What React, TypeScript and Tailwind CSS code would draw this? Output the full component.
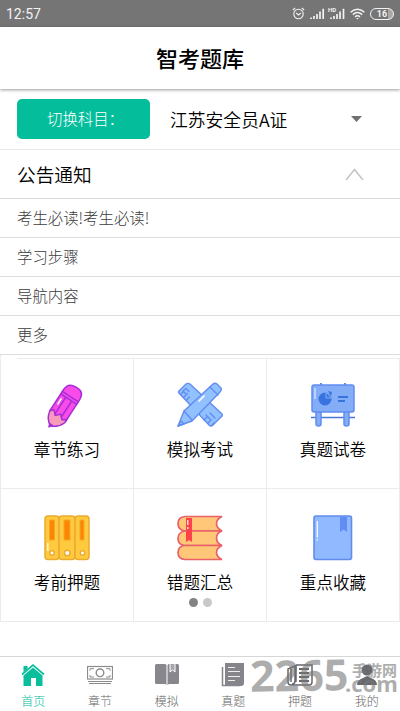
import React from 'react';

const notices = ['考生必读!考生必读!', '学习步骤', '导航内容', '更多'];

function Signal() {
  return (
    <svg width="15" height="12" viewBox="0 0 15 12" fill="none" stroke="#f2f2f2" strokeWidth="1.7">
      <path d="M1 11V9.5M4 11V8M7 11V6M10 11V3.5M13.2 11V.8" />
    </svg>
  );
}

function StatusBar() {
  return (
    <div className="flex h-[27px] items-center bg-[#757575] pl-[6px] pr-[6px] text-[#f2f2f2]">
      <span className="pt-[1px] font-[Roboto] text-[14px] leading-none">12:57</span>
      <div className="ml-auto flex items-center">
        <svg width="13" height="13" viewBox="0 0 13 13" fill="none" stroke="#f2f2f2" strokeWidth="1.1">
          <circle cx="6.5" cy="7" r="4.7" />
          <path d="M.8 3L3.2 1M12.2 3L9.8 1M4.2 6l2.3 2 2.4-2" />
        </svg>
        <div className="ml-[5px] h-3"><Signal /></div>
        <div className="relative ml-[4px] h-3">
          <svg width="16" height="12" viewBox="0 0 16 12" fill="none" stroke="#f2f2f2" strokeWidth="1.7">
            <path d="M2 11V9.5M5 11V8M8 11V6M11 11V3.5M14.5 11V.8" />
          </svg>
          <span className="absolute -left-px -top-px font-[Roboto] text-[6px] font-bold leading-none">HD</span>
        </div>
        <svg className="ml-[5px]" width="15" height="12" viewBox="0 0 15 12" fill="none" stroke="#f2f2f2" strokeWidth="1.5">
          <path d="M.6 4.3Q7.5-1.9 14.4 4.3M2.8 6.6Q7.5 2.5 12.2 6.6M5 8.8Q7.5 6.8 10 8.8" />
          <path d="M6.2 10.1h2.6L7.5 11.6z" fill="#f2f2f2" stroke="none" />
        </svg>
        <div className="ml-[5px] flex h-[12px] w-[24px] items-center justify-center rounded-full border border-[#f2f2f2] bg-[linear-gradient(90deg,transparent_78%,#a8a8a8_78%)] pt-[2px] font-[Roboto] text-[9px] font-bold leading-none">16</div>
      </div>
    </div>
  );
}

function Pencil() {
  return (
    <svg width="46" height="46" viewBox="0 0 46 46" strokeLinejoin="round" strokeLinecap="round">
      <g transform="translate(5.5 44) rotate(33)" stroke="#a52ed4" strokeWidth="1.5">
        <path d="M-8-13V-38Q-8-47 1-47H3Q11-47 11-38V-13L5-3Q2-1 0-2Z" fill="#f94bea" />
        <path d="M-8-13L-5-16-1-12 3-16 7-12 11-15V-11Q8-3 1-1Q-6-3-8-13Z" fill="#f79abb" />
        <path d="M-8-36H11M-8-33H11M-2-33V-14M5-33V-14" fill="none" />
        <path d="M-1-2L2-2 0 1Z" fill="#a52ed4" />
        <path d="M-5-29V-23" stroke="#fff" strokeWidth="1.5" />
      </g>
    </svg>
  );
}

function RulerPen() {
  return (
    <svg width="46" height="46" viewBox="0 0 46 46" stroke="#628cf0" strokeWidth="1.4" strokeLinejoin="round" strokeLinecap="round">
      <path d="M2 11Q1 10 2 9L9 2Q11 .8 13 2L45 32Q46 34 44 35L36 43Q34 45 32 43Z" fill="#91c1ff" />
      <path d="M3.5 12.5l3-3 2 2M6.5 15.5l4-4M9.5 18l3-3M6 9l3-2.5 3 3M27 38l3-3M29 33l4 4M31 41l3-3M33 31l5 5M35 43l2-2" fill="none" />
      <path d="M1 44L7 29 36 2Q38 .5 40 2L44 6Q45 8 43 10L15 39Z" fill="#91c1ff" />
      <path d="M7 29l8 9M33 5l8 8M1 44l3-5 3 3Z" fill="none" />
      <path d="M22 19l5-5" stroke="#fff" strokeWidth="1.7" />
    </svg>
  );
}

function Board() {
  return (
    <svg width="46" height="46" viewBox="0 0 46 46" stroke="#628cf0" strokeWidth="1.5" strokeLinejoin="round">
      <path d="M11 1v4M35 1v4" strokeWidth="2" />
      <path d="M1 35.5h44" stroke="#4778d6" strokeWidth="1.5" />
      <path d="M6 28h5v14q0 2-2.5 2T6 42zM34 28h5v14q0 2-2.5 2T34 42z" fill="#83adf7" />
      <rect x="2" y="3" width="42" height="27" rx="2" fill="#83adf7" />
      <circle cx="15" cy="17" r="6.5" fill="#3973df" stroke="none" />
      <path d="M16 16V9.5l5 6.5z" fill="#3973df" stroke="#83adf7" strokeWidth="1" />
      <path d="M18 9l4 1-1 4" fill="#3973df" stroke="none" />
      <path d="M28 15h10M28 19h7" stroke="#3973df" strokeWidth="2" />
      <path d="M5 6v11" stroke="#cbe0ff" />
    </svg>
  );
}

function Binders() {
  return (
    <svg width="46" height="46" viewBox="0 0 46 46" fill="#ffca3d" stroke="#edaa31" strokeWidth="1.5">
      <rect x="1" y="1" width="14" height="43.5" rx="3" />
      <rect x="15" y="1" width="16" height="43.5" rx="3" />
      <rect x="31" y="1" width="14" height="43.5" rx="3" />
      <path d="M5.5 5h5v20h-5zM20 5h6v20h-6zM36 5h4v20h-4z" fill="#ff8500" strokeWidth="1" />
      <g fill="#fff"><circle cx="8" cy="38" r="2.2" /><circle cx="23.3" cy="38" r="2.8" /><circle cx="38.5" cy="38" r="2.2" /></g>
      <path d="M3.8 28v8" stroke="#fff4ba" strokeWidth="1.7" />
    </svg>
  );
}

function Books() {
  return (
    <svg width="46" height="46" viewBox="0 0 46 46" fill="#ffc777" stroke="#e8616a" strokeWidth="1.7">
      <path d="M45 1.5H8Q1 2 1 8.5T8 16H45Q39.5 13 39.5 8.5T45 1.5Z" />
      <path d="M45 16H8Q1 17 1 23.5T8 30.5H45Q39.5 28 39.5 23T45 16Z" />
      <path d="M45 30.5H8Q1 31 1 37.5T8 44.5H45Q39.5 42 39.5 37.5T45 30.5Z" />
      <path d="M9 3h6v24l-3-2-3 2z" fill="#ff4249" stroke="none" />
      <path d="M10.8 5v5M10.8 12v2" stroke="#fff" strokeWidth="1.2" />
    </svg>
  );
}

function Bookmark() {
  return (
    <svg width="46" height="46" viewBox="0 0 46 46">
      <rect x="4" y="1" width="37.5" height="43.5" rx="2" fill="#91b9ff" stroke="#618cea" strokeWidth="1.6" />
      <path d="M30 2h7v15l-3.5-2.5L30 17z" fill="#618cf4" />
      <path d="M7.3 6v16.5M7.3 24v1.5" stroke="#eef6ff" strokeWidth="1.4" />
    </svg>
  );
}

const tiles = [
  { label: '章节练习', icon: <Pencil /> },
  { label: '模拟考试', icon: <RulerPen /> },
  { label: '真题试卷', icon: <Board /> },
  { label: '考前押题', icon: <Binders /> },
  { label: '错题汇总', icon: <Books /> },
  { label: '重点收藏', icon: <Bookmark /> },
];

const tabs = [
  {
    label: '首页',
    icon: <svg width="26" height="24" viewBox="0 0 26 24"><path d="M3.5 3h4v3L3.5 9zM13 4.5l9.5 8V23H16v-8h-5v8H3.5V12.5z" fill="#0abe9c" /><path d="M2 11.5L13 2l11 9.5" fill="none" stroke="#0abe9c" strokeWidth="1.7" /></svg>,
  },
  {
    label: '章节',
    icon: <svg width="26" height="24" viewBox="0 0 26 24" fill="none" stroke="#8c8c8c"><rect x=".5" y="3.5" width="25" height="12.5" strokeWidth="1.2" /><circle cx="13" cy="9.8" r="3.8" strokeWidth="1.4" /><path d="M3 5.7h4M19 5.7h4M3 14h4M19 14h4M3 5.7v2M23 5.7v2M3 12v2M23 12v2M1 18.5h24M2 20.5h22" /></svg>,
  },
  {
    label: '模拟',
    icon: <svg width="26" height="24" viewBox="0 0 26 24"><path d="M1 2.5Q1 1 2.5 1H11q1.5 0 1.5 1.5V22L11 21H2.5Q1 21 1 19.5zM13.5 2.5Q13.5 1 15 1h8.5Q25 1 25 2.5v17Q25 21 23.5 21H15l-1.5 1z" fill="#89878e" /><path d="M16 1v8l2.5-2L21 9V1" fill="#a7a5ac" stroke="#fff" /></svg>,
  },
  {
    label: '真题',
    icon: <svg width="26" height="24" viewBox="0 0 26 24" fill="none"><path d="M5 0h19v20q0 3-3 3H5z" fill="#85858b" /><path d="M2.5 4v18.5H20" stroke="#85858b" strokeWidth="1.5" /><path d="M8 4.5h7M8 8.5h12M8 13.5h12M8 17.5h7" stroke="#eee" /></svg>,
  },
  {
    label: '押题',
    icon: <svg width="26" height="24" viewBox="0 0 26 24" fill="none" stroke="#66666c" strokeWidth="1.5"><path d="M9 2h16v17q0 3-3 3H4q-3 0-3-3V6l7-3v15q0 3-3 3M4 6v13M9 2v17" /><path d="M12 6h10M12 10h10M12 14h10M12 18h10" strokeWidth="2" /></svg>,
  },
  {
    label: '我的',
    icon: <svg width="26" height="24" viewBox="0 0 26 24" fill="#68686e"><circle cx="13" cy="7" r="5.5" /><path d="M3 22q0-5 6-7l4-2 4 2q6 2 6 7z" /></svg>,
  },
];

export default function App() {
  return (
    <div className="relative flex h-[711px] w-[400px] flex-col overflow-hidden bg-white font-['Noto_Sans_CJK_SC',sans-serif] text-black">
      <StatusBar />
      <header className="z-10 flex h-[62px] items-center justify-center bg-white pb-[2px] shadow-[0_1px_3px_rgba(0,0,0,0.4)]">
        <h1 className="text-[22px] font-medium leading-none">智考题库</h1>
      </header>
      <div className="flex h-[61px] items-center border-b border-[#e9e9e9] pl-[17px]">
        <div className="flex h-10 w-[133px] items-center rounded-[5px] bg-[#04bd9b] pl-[30px] text-[15.4px] font-light text-white">切换科目：</div>
        <span className="ml-[20px] text-[17.8px] font-[350]">江苏安全员A证</span>
        <svg className="ml-auto mr-[38px]" width="11" height="6" viewBox="0 0 11 6"><path d="M0 0h11L5.5 6z" fill="#707070" /></svg>
      </div>
      <div className="flex h-[49px] items-center justify-between border-b border-[#dadada] pl-[17px] pr-[36px]">
        <span className="text-[18.7px] font-[350]">公告通知</span>
        <svg width="19" height="13" viewBox="0 0 19 13"><path d="M1 12l8.5-10.5L18 12" fill="none" stroke="#c5c5c5" strokeWidth="1.6" /></svg>
      </div>
      {notices.map((text) => (
        <div key={text} className="flex h-[39px] items-center border-b-[1.5px] border-[#dedede] pl-[17px] text-[15.4px] font-light text-[#3c3c3c]">{text}</div>
      ))}
      <div className="h-[3px] border-l border-[#ebebeb]" />
      <div className="ml-[17px] h-px shrink-0 bg-[#ebebeb]" />
      <div className="grid grid-cols-[133px_133px_133px] border-l border-[#ebebeb]">
        {tiles.map((tile, i) => (
          <div key={tile.label} className={`flex flex-col items-center border-b border-r border-[#ebebeb] ${i < 3 ? 'h-[130px] pt-[23px]' : 'h-[133px] pt-[26px]'}`}>
            <div className="h-[46px]">{tile.icon}</div>
            <span className="mt-[9px] text-[16.6px] font-[350] leading-[24px]">{tile.label}</span>
            {i === 4 && (
              <div className="mt-[4px] flex gap-[5px]">
                <span className="size-[9px] rounded-full bg-[#838383]" />
                <span className="size-[9px] rounded-full bg-[#c8c8c8]" />
              </div>
            )}
          </div>
        ))}
      </div>
      <nav className="mt-auto grid h-[55px] shrink-0 grid-cols-6 border-t border-[#d6d6d6] pt-[6px]">
        {tabs.map((tab, i) => (
          <div key={tab.label} className={`flex flex-col items-center ${i === 0 ? 'text-[#04bd9b]' : 'text-[#666]'}`}>
            <div className="h-6">{tab.icon}</div>
            <span className="mt-[5px] text-[12px] font-light leading-[17px]">{tab.label}</span>
          </div>
        ))}
      </nav>
      <div className="pointer-events-none absolute bottom-0 right-0 h-[56px] w-[152px] text-[#787878] opacity-60">
        <span className="absolute left-[2px] top-[3px] -rotate-1 font-['Open_Sans'] text-[43px] font-bold leading-[34px]">2265</span>
        <span className="absolute left-[97px] top-[21px] font-['Open_Sans'] text-[22px] font-bold leading-[15px]">.com</span>
        <span className="absolute left-[104px] top-[9px] text-[15px] font-bold leading-[12px]">手游网</span>
      </div>
    </div>
  );
}
